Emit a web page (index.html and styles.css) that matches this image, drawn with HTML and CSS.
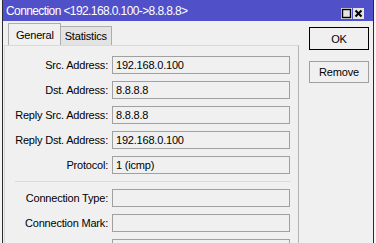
FILE: index.html
```html
<!DOCTYPE html>
<html>
  <head>
    <title>Connection</title>
    <link rel="stylesheet" href="styles.css">
  </head>
  <body>
    <div class="window">
      <div class="title-bar">
        <span class="title">Connection &lt;192.168.0.100-&gt;8.8.8.8&gt;</span>
        <div class="title-buttons">
          <span class="tb-btn">
            <svg width="11" height="11" viewBox="0 0 11 11"><rect x="1.5" y="1.5" width="8" height="8" fill="none" stroke="#000" stroke-width="1.4"/></svg>
          </span>
          <span class="tb-btn">
            <svg width="11" height="11" viewBox="0 0 11 11"><path d="M2.5 2.5 L8.5 8.5 M8.5 2.5 L2.5 8.5" stroke="#000" stroke-width="2"/></svg>
          </span>
        </div>
      </div>

      <div class="window-body">
        <div class="tabs-area">
          <div class="tabs">
            <span class="tab active">General</span>
            <span class="tab">Statistics</span>
          </div>
          <div class="tab-panel">
            <div class="row">
              <label>Src. Address:</label>
              <div class="field">192.168.0.100</div>
            </div>
            <div class="row">
              <label>Dst. Address:</label>
              <div class="field">8.8.8.8</div>
            </div>
            <div class="row">
              <label>Reply Src. Address:</label>
              <div class="field">8.8.8.8</div>
            </div>
            <div class="row">
              <label>Reply Dst. Address:</label>
              <div class="field">192.168.0.100</div>
            </div>
            <div class="row">
              <label>Protocol:</label>
              <div class="field">1 (icmp)</div>
            </div>
            <div class="separator"></div>
            <div class="row">
              <label>Connection Type:</label>
              <div class="field"></div>
            </div>
            <div class="row">
              <label>Connection Mark:</label>
              <div class="field"></div>
            </div>
            <div class="row">
              <label></label>
              <div class="field"></div>
            </div>
          </div>
        </div>

        <div class="side-buttons">
          <button type="button" class="btn btn-default">OK</button>
          <button type="button" class="btn">Remove</button>
        </div>
      </div>
    </div>
  </body>
</html>
```

FILE: styles.css
```css
html,
body {
  margin: 0;
  height: 100%;
  overflow: hidden;
}
body {
  font-family: "Liberation Sans", Arial, sans-serif;
  font-size: 11px;
  letter-spacing: -0.2px;
  color: #000;
  background-color: #f4f4f4;
}
.window {
  margin-left: 2px;
  width: 370px;
  height: 243px;
  overflow: hidden;
  border-left: 1px solid #2b2b2b;
  border-right: 1px solid #2b2b2b;
  background-color: #f0f0f0;
}
.title-bar {
  height: 21px;
  display: flex;
  align-items: center;
  padding-left: 3px;
  background-color: #5050c8;
  color: #fff;
}
.title {
  font-size: 12px;
  letter-spacing: -0.6px;
  flex: 1;
}
.title-buttons {
  display: flex;
  gap: 1px;
  margin-right: 9px;
  margin-top: 6px;
}
.tb-btn {
  width: 11px;
  height: 11px;
  background-color: #e4e4e4;
  display: flex;
}
.window-body {
  display: flex;
}
.tabs-area {
  width: 296px;
}
.tabs {
  display: flex;
  align-items: flex-end;
  height: 24px;
  padding-left: 5px;
}
.tab {
  height: 18px;
  padding: 0 4px;
  border: 1px solid #adadad;
  border-bottom: none;
  background-color: #e3e3e3;
  line-height: 19px;
}
.tab.active {
  height: 21px;
  line-height: 22px;
  background-color: #f0f0f0;
  padding: 0 6px 0 7px;
}
.tab + .tab {
  border-left: none;
}
.tab-panel {
  margin-left: 1px;
  border-top: 1px solid #d9d9d9;
  border-left: 1px solid #d9d9d9;
  border-right: 1px solid #b4b4b4;
  height: 197px;
  padding-top: 10px;
}
.row {
  display: flex;
  align-items: center;
  gap: 4px;
  margin-bottom: 7px;
}
.row label {
  width: 103px;
  text-align: right;
}
.field {
  width: 173px;
  height: 16px;
  line-height: 16px;
  padding-left: 3px;
  border: 1px solid #a0a0a0;
  background-color: #f0f0f0;
}
.separator {
  height: 1px;
  margin: 1px 8px 7px 10px;
  background-color: #dadada;
}
.side-buttons {
  display: flex;
  flex-direction: column;
  gap: 11px;
  padding: 6px 0 0 10px;
}
.btn {
  width: 60px;
  height: 22px;
  padding: 0;
  font-family: "Liberation Sans", Arial, sans-serif;
  font-size: 11px;
  letter-spacing: -0.2px;
  background-color: #f0f0f0;
  border: 1px solid #a0a0a0;
}
.btn-default {
  height: 23px;
  border-color: #000;
}
```
